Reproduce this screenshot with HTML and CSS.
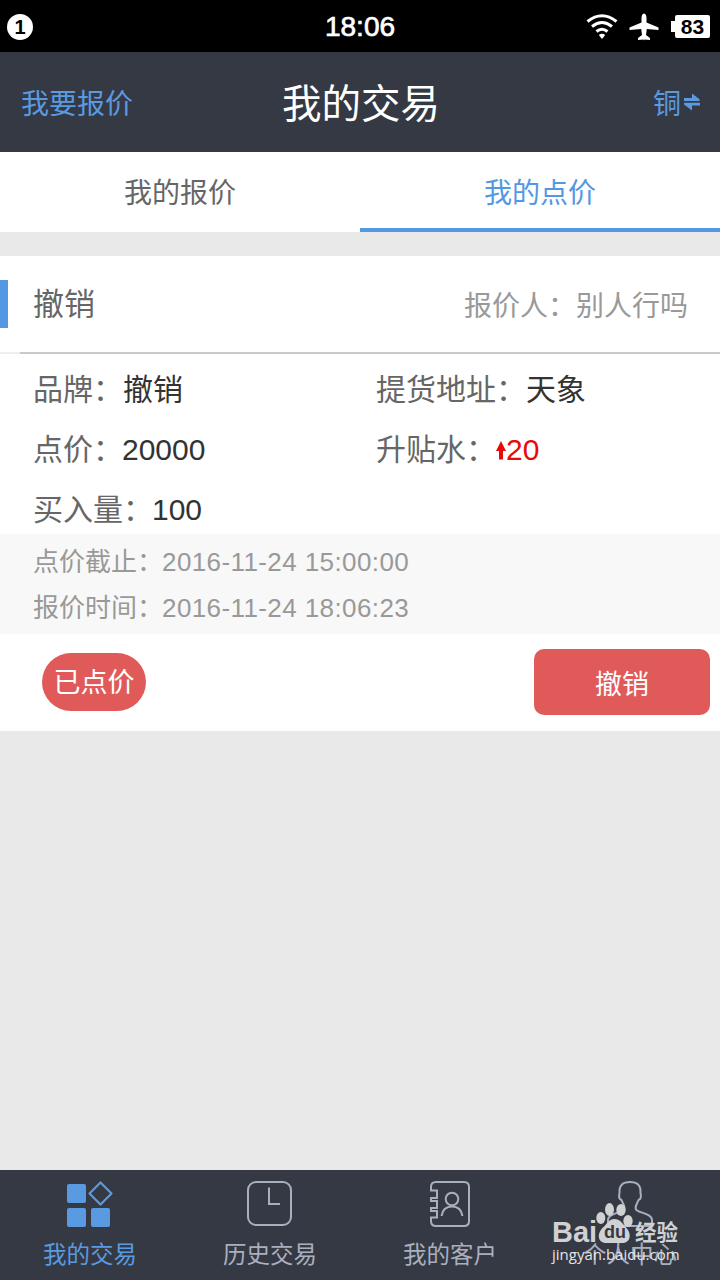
FILE: index.html
```
<!DOCTYPE html>
<html lang="zh-CN">
<head>
    <meta charset="UTF-8">
    <meta name="viewport" content="width=device-width, initial-scale=1.0">
    <title>我的交易</title>
    <link rel="stylesheet" href="styles.css">
</head>
<body>

<!-- 状态栏 -->
<div class="status-bar">
    <span class="notice">1</span>
    <span class="clock">18:06</span>
    <div class="status-icons">
        <svg width="32" height="26" viewBox="0 0 32 26" fill="none" stroke="#fff" stroke-width="3">
            <path d="M1.500 7.500Q16-4 30.500 7.500"/>
            <path d="M6 12.500Q16 4.500 26 12.500"/>
            <path d="M10.500 17.500Q16 13 21.500 17.500"/>
            <path d="M12.800 21Q16 18.600 19.200 21L16 25z" fill="#fff" stroke="none"/>
        </svg>
        <svg class="plane" width="30" height="28" viewBox="0 0 30 28" fill="#fff">
            <path d="M15 0.500C16.800 0.500 17.500 3 17.500 5V9.500L29.500 14.500V17L17.800 16L17 22L21 25V27L15.500 26.500L15 27.500L14.500 26.500L9 27V25L13 22L12.200 16L0.500 17V14.500L12.500 9.500V5C12.500 3 13.200 0.500 15 0.500z"/>
        </svg>
        <span class="battery">83</span>
    </div>
</div>

<!-- 顶部标题 -->
<header class="header">
    <a class="header-left">我要报价</a>
    <h1>我的交易</h1>
    <a class="header-right">铜
        <svg width="18" height="18" viewBox="0 0 18 18" fill="#5a9ae0">
            <path d="M1 5H9V0.500L16.500 6.200V8H1z"/>
            <path d="M17 12.600H9V17.500L1 11.500V9.700H17z"/>
        </svg>
    </a>
</header>

<div class="tabs">
    <a class="tab">我的报价</a>
    <a class="tab active">我的点价</a>
</div>

<!-- 点价卡片 -->
<section class="card">
    <div class="card-head">
        <h2>撤销</h2>
        <span class="quoter">报价人：别人行吗</span>
    </div>
    <div class="divider"></div>
    <div class="info">
        <div class="item">品牌：<b>撤销</b></div>
        <div class="item">提货地址：<b>天象</b></div>
        <div class="item">点价：<b class="num">20000</b></div>
        <div class="item">升贴水：<span class="up"><svg width="10" height="19" viewBox="0 0 10 19"><path d="M5 0L10 10H7V18.500H3V10H0z" fill="#e60b0b"/></svg>20</span></div>
        <div class="item">买入量：<b class="num">100</b></div>
    </div>
    <div class="times">
        <p>点价截止：<span>2016-11-24 15:00:00</span></p>
        <p>报价时间：<span>2016-11-24 18:06:23</span></p>
    </div>
    <div class="card-foot">
        <span class="badge">已点价</span>
        <button class="cancel">撤销</button>
    </div>
</section>

<!-- 底部导航 -->
<nav class="nav">
    <a class="nav-item active">
        <svg width="48" height="48" viewBox="0 0 48 48" fill="#5a9ae0">
            <rect x="1" y="4" width="19" height="19" rx="2"/>
            <rect x="1" y="28" width="19" height="19" rx="2"/>
            <rect x="25" y="28" width="19" height="19" rx="2"/>
            <path d="M34.500 2.500L45.500 13.500L34.500 24.500L23.500 13.500z" fill="none" stroke="#5a9ae0" stroke-width="2.200" stroke-linejoin="round"/>
        </svg>
        我的交易
    </a>
    <a class="nav-item">
        <svg width="48" height="48" viewBox="0 0 48 48" fill="none" stroke="#a9afbf" stroke-width="2">
            <rect x="2" y="2" width="43" height="43" rx="8"/>
            <path d="M23 7.500V24H34"/>
        </svg>
        历史交易
    </a>
    <a class="nav-item">
        <svg width="48" height="48" viewBox="0 0 48 48" fill="none" stroke="#a9afbf" stroke-width="2">
            <path d="M5 10.500V7Q5 2 10 2H38Q43 2 43 7V41Q43 46 38 46H10Q5 46 5 41V37.500H11V31H5V28H11V21H5V18H11V10.500H4"/>
            <circle cx="26" cy="19" r="6.300"/>
            <path d="M15.500 36Q17 26.500 26 26.500T36.500 36"/>
        </svg>
        我的客户
    </a>
    <a class="nav-item">
        <svg width="48" height="48" viewBox="0 0 48 48" fill="none" stroke="#a9afbf" stroke-width="2">
            <path d="M18 29.500C19.500 26 17 24 15.500 20C12.500 19 13 15 13.500 13C13 5 17 2 24 2S35 5 34.500 13C35 15 35.500 19 32.500 20C31 24 28.500 26 30 29.500C32 33 46 33 46 40V46H2V40C2 33 16 33 18 29.500z"/>
        </svg>
        个人中心
    </a>
</nav>

<!-- 水印 -->
<div class="watermark">
    <div class="wm-logo">
        <span class="wm-bai">Bai</span>
        <span class="wm-paw">
            <svg width="38" height="42" viewBox="0 0 38 42" fill="#d0d1d3">
                <ellipse cx="4.800" cy="16" rx="4.500" ry="6"/>
                <ellipse cx="13.500" cy="7.500" rx="4.500" ry="6.500"/>
                <ellipse cx="25" cy="8" rx="4.700" ry="6"/>
                <ellipse cx="32" cy="19" rx="4.700" ry="6"/>
                <path d="M18.500 17C24 17 26 21 29.500 25C36 31 35 41 26.500 41H10.500C1 41 1 31 7 25.500C11 22 13 17 18.500 17z"/>
            </svg>
            <i>du</i>
        </span>
        <span class="wm-cn">经验</span>
    </div>
    <div class="wm-url">jingyan.baidu.com</div>
</div>

</body>
</html>
```
FILE: styles.css
```
/* 全局 */
* {
    box-sizing: border-box;
}

body {
    font-family: "Liberation Sans", "Noto Sans CJK SC", sans-serif;
    background: #e9e9e9;
    height: 1280px;
    margin: 0;
    display: flex;
    flex-direction: column;
    position: relative;
    overflow: hidden;
}

h1, h2, p {
    margin: 0;
    font-weight: normal;
}

svg {
    flex-shrink: 0;
}

/* 状态栏 */
.status-bar {
    height: 52px;
    background: #000;
    color: #fff;
    display: grid;
    grid-template-columns: 1fr auto 1fr;
    align-items: center;
    padding: 0 10px 0 7px;
}

.notice {
    width: 26px;
    height: 26px;
    border-radius: 50%;
    background: #fff;
    color: #000;
    font-size: 20px;
    font-weight: bold;
    line-height: 27px;
    text-align: center;
}

.clock {
    font-size: 28px;
    line-height: 52px;
    padding: 1px 0 0 3px;
    -webkit-text-stroke: 0.7px #fff;
}

.status-icons {
    display: flex;
    justify-content: flex-end;
    align-items: center;
}

.plane {
    margin: 0 16px 0 11px;
}

.battery {
    width: 35px;
    height: 23px;
    border-radius: 2px;
    background: #fff;
    color: #000;
    font-size: 21px;
    font-weight: bold;
    line-height: 24px;
    text-align: center;
}

.battery::before {
    content: '';
    float: left;
    width: 5px;
    height: 11px;
    margin: 6px -1px 0 -4px;
    background: #fff;
}

/* 标题栏 */
.header {
    height: 100px;
    background: #353943;
    display: grid;
    grid-template-columns: 1fr auto 1fr;
    align-items: center;
    padding: 0 19px 0 21px;
    color: #5a9ae0;
    font-size: 28px;
}

.header h1 {
    color: #fff;
    font-size: 39.5px;
    line-height: 96px;
    padding-top: 4px;
}

.header-right {
    display: flex;
    justify-content: flex-end;
    align-items: center;
    gap: 2px;
}

/* 选项卡 */
.tabs {
    display: flex;
    height: 80px;
    background: #fff;
}

.tab {
    flex: 1;
    padding-top: 4px;
    text-align: center;
    font-size: 28px;
    line-height: 76px;
    color: #666;
}

.tab.active {
    color: #5398e2;
    border-bottom: 4px solid #5398e2;
}

/* 卡片 */
.card {
    margin-top: 24px;
    background: #fff;
}

.card-head {
    height: 96px;
    display: flex;
    align-items: center;
    justify-content: space-between;
    padding-right: 32px;
}

.card-head h2 {
    border-left: 8px solid #5398e2;
    padding: 2px 0 0 25px;
    font-size: 31px;
    line-height: 46px;
    color: #666;
}

.quoter {
    font-size: 28px;
    color: #999;
}

.divider {
    height: 2px;
    border-left: 20px solid #eee;
    background: #c9c9c9;
}

.info {
    display: grid;
    grid-template-columns: 343px 1fr;
    row-gap: 12px;
    padding: 12px 0 0 33px;
    font-size: 30px;
    line-height: 48px;
    color: #666;
}

.item {
    height: 48px;
}

.info b {
    color: #333;
    font-weight: normal;
}

.num {
    margin-left: -1px;
}

.up {
    color: #e60b0b;
}

.times {
    height: 100px;
    padding: 5px 33px 0;
    background: #f8f8f8;
    color: #999;
    font-size: 26px;
    line-height: 46px;
}

.times span {
    margin-left: -1px;
    letter-spacing: 0.4px;
}

.card-foot {
    height: 97px;
    display: flex;
    align-items: center;
    justify-content: space-between;
    padding: 0 10px 1px 42px;
}

.badge {
    width: 104px;
    height: 58px;
    border-radius: 29px;
    background: #e05a5a;
    color: #fff;
    font-size: 27px;
    line-height: 60px;
    text-align: center;
}

.cancel {
    width: 176px;
    height: 66px;
    border: none;
    border-radius: 10px;
    background: #e05a5a;
    color: #fff;
    font-family: inherit;
    font-size: 27px;
}

/* 底部导航 */
.nav {
    margin-top: auto;
    height: 110px;
    display: flex;
    background: #353943;
}

.nav-item {
    flex: 1;
    display: flex;
    flex-direction: column;
    align-items: center;
    padding-top: 10px;
    gap: 10px;
    font-size: 23.5px;
    line-height: 34px;
    color: #a9afbf;
}

.nav-item.active {
    color: #5a9ae0;
}

/* 水印 */
.watermark {
    position: absolute;
    left: 552px;
    top: 1202px;
    color: #d0d1d3;
}

.wm-logo {
    display: flex;
    align-items: flex-end;
    height: 42px;
    font-weight: bold;
}

.wm-bai {
    font-size: 29px;
    line-height: 23px;
    width: 44px;
}

.wm-paw {
    position: relative;
    width: 38px;
    height: 42px;
}

.wm-paw i {
    position: absolute;
    left: 0;
    right: 0;
    bottom: 3px;
    font-style: normal;
    font-size: 18px;
    line-height: 18px;
    text-align: center;
    color: #353943;
}

.wm-cn {
    font-size: 21.5px;
    line-height: 22px;
    margin-left: 1px;
}

.wm-url {
    font-family: "Open Sans", "Noto Sans", sans-serif;
    font-size: 15px;
    line-height: 20px;
    color: #e4e5e7;
}
```
